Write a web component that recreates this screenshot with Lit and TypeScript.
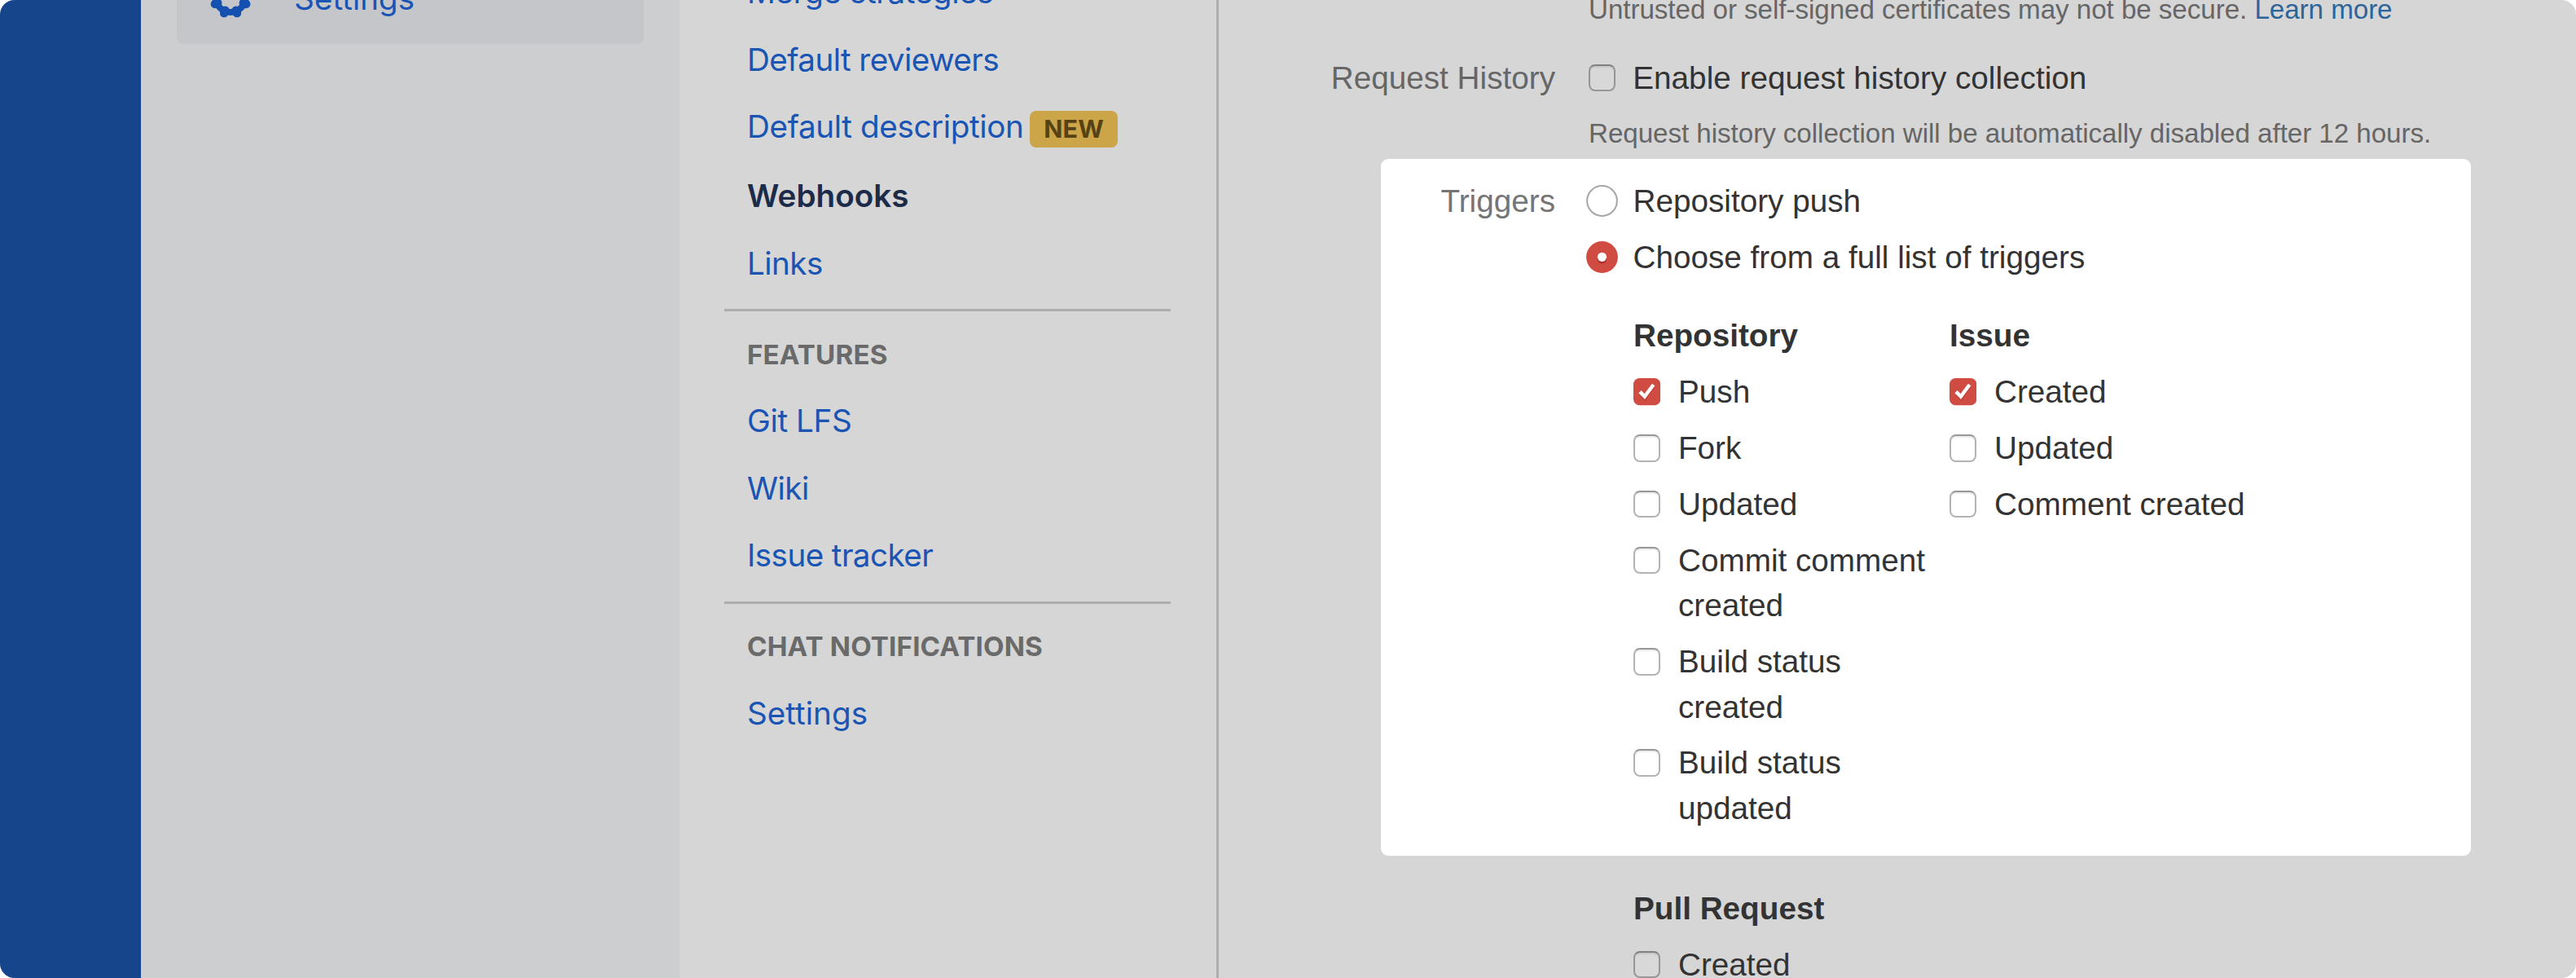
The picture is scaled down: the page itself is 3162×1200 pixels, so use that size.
import { LitElement, html, css, svg } from "lit";
import { classMap } from "lit/directives/class-map.js";

interface NavItem {
  label: string;
  fit?: "tight" | "snug";
  active?: boolean;
  badge?: string;
}
interface NavSection {
  title?: string;
  wide?: boolean;
  items: NavItem[];
}
interface TriggerGroup {
  title: string;
  options: { label: string; checked?: boolean }[];
}

const NAV: NavSection[] = [
  {
    items: [
      { label: "Merge strategies", fit: "snug" },
      { label: "Default reviewers", fit: "tight" },
      { label: "Default description", fit: "snug", badge: "NEW" },
      { label: "Webhooks", active: true },
      { label: "Links", fit: "tight" },
    ],
  },
  {
    title: "Features",
    items: [
      { label: "Git LFS", fit: "snug" },
      { label: "Wiki", fit: "tight" },
      { label: "Issue tracker", fit: "tight" },
    ],
  },
  { title: "Chat notifications", items: [{ label: "Settings" }] },
];

const REPOSITORY: TriggerGroup = {
  title: "Repository",
  options: [
    { label: "Push", checked: true },
    { label: "Fork" },
    { label: "Updated" },
    { label: "Commit comment created" },
    { label: "Build status created" },
    { label: "Build status updated" },
  ],
};
const ISSUE: TriggerGroup = {
  title: "Issue",
  options: [{ label: "Created", checked: true }, { label: "Updated" }, { label: "Comment created" }],
};
const PULL_REQUEST: TriggerGroup = {
  title: "Pull Request",
  options: [{ label: "Created" }],
};

class CheckMark extends LitElement {
  static properties = {
    checked: { type: Boolean, reflect: true },
    dimmed: { type: Boolean, reflect: true },
  };
  declare checked: boolean;
  declare dimmed: boolean;

  static styles = css`
    :host {
      display: block;
      flex: none;
      width: 33.3px;
      height: 33.3px;
    }
    .box {
      display: block;
      box-sizing: border-box;
      width: 100%;
      height: 100%;
      border: 2px solid #b3b3b3;
      border-top-color: #979797;
      border-radius: 8px;
      background: #fff;
      box-shadow: inset 0 2px 1px #ececec;
    }
    :host([dimmed]) .box {
      border-color: #969696;
      border-top-color: #808080;
      background: #d8d8d8;
      box-shadow: inset 0 2px 1px #c8c8c8;
    }
    .mark {
      display: block;
      width: 100%;
      height: 100%;
    }
  `;

  render() {
    return this.checked
      ? html`<svg class="mark" viewBox="0 0 33.3 33.3" fill="none">
          <rect width="33.3" height="33.3" rx="7.5" fill="#d04c43" />
          <path d="M9 20.2 14.2 25.6 24.3 11" stroke="#b93a33" stroke-width="3" />
          <path d="M8 16.6 13.8 22.6 24.6 8" stroke="#fff" stroke-width="4.4" />
        </svg>`
      : html`<span class="box"></span>`;
  }
}
customElements.define("check-mark", CheckMark);

class AppRoot extends LitElement {
  static styles = css`
    :host {
      display: block;
      font-family: "Liberation Sans", Arial, sans-serif;
      font-size: 38.7px;
      line-height: 55.2px;
      color: #333;
    }
    .page {
      display: flex;
      width: 3162px;
      height: 1200px;
      overflow: hidden;
      border-radius: 18px;
      background: #d6d6d6;
    }
    .rail {
      flex: none;
      width: 173.4px;
      background: #17458c;
    }
    .sidebar {
      flex: none;
      box-sizing: border-box;
      width: 660.6px;
      padding: 0 44px;
      background: #cdced0;
    }
    .selected {
      display: flex;
      align-items: center;
      box-sizing: border-box;
      height: 110px;
      margin-top: -56px;
      padding-left: 40px;
      gap: 51.5px;
      border-radius: 8px;
      background: #c5c6ca;
      color: #1a55b4;
      font-family: Inter, sans-serif;
    }
    .gear {
      flex: none;
      width: 52px;
      height: 52px;
      margin-top: -4px;
    }
    .nav {
      flex: none;
      box-sizing: border-box;
      width: 662px;
      padding: 0 55.5px;
      border-right: 3px solid #adadad;
      font-family: Inter, sans-serif;
      color: #1a55b4;
    }
    .nav-section {
      padding-left: 27.5px;
    }
    .nav-section:first-child {
      margin-top: -51px;
    }
    .divider {
      height: 3px;
      margin: 14.6px 0 12.8px;
      background: #adadad;
    }
    .nav-title {
      font-size: 33.2px;
      font-weight: 700;
      line-height: 80.4px;
      letter-spacing: 0.12px;
      text-transform: uppercase;
      color: #6a6a6a;
    }
    .nav-item {
      display: flex;
      line-height: 82.6px;
      white-space: nowrap;
    }
    .nav-item.snug {
      letter-spacing: -0.41px;
    }
    .nav-item.tight {
      letter-spacing: -0.61px;
    }
    .nav-item.active {
      font-weight: 600;
      color: #1c2b49;
    }
    .nav-item.badged {
      line-height: 82.6px;
      padding-bottom: 2.4px;
    }
    .badge {
      box-sizing: border-box;
      width: 108px;
      height: 45px;
      margin: 21.5px 0 0 7.5px;
      border-radius: 8px;
      background: #cca548;
      color: #574213;
      font-size: 30.4px;
      font-weight: 700;
      line-height: 45px;
      letter-spacing: 0.2px;
      text-align: center;
    }
    .form {
      flex: 1;
      min-width: 0;
    }
    .row {
      display: flex;
      gap: 41px;
    }
    .label {
      flex: none;
      width: 413px;
      text-align: right;
      white-space: nowrap;
      color: #666;
    }
    .hint {
      font-size: 33.2px;
      line-height: 46px;
      letter-spacing: -0.06px;
      white-space: nowrap;
      color: #666;
    }
    .hint.top {
      margin-top: -11px;
    }
    .hint.after {
      margin-top: 18px;
    }
    .learn {
      color: #2f6499;
    }
    .history {
      margin-top: 32.6px;
    }
    .choice {
      display: flex;
    }
    .choice.sub {
      margin-top: 13.75px;
    }
    .choice check-mark {
      margin-top: 11px;
    }
    .choice .text {
      margin-left: 21.7px;
    }
    .choice.enable .text {
      margin-left: 21px;
    }
    .radio {
      flex: none;
      width: 39px;
      height: 39px;
      margin: 7.8px 18.3px 0 -2.8px;
    }
    .panel {
      box-sizing: border-box;
      width: 1338px;
      height: 855px;
      margin: 8.2px 0 0 199px;
      padding-top: 24px;
      border-radius: 9px;
      background: #fff;
    }
    .panel .label {
      width: 214px;
      color: #757575;
    }
    .groups {
      display: flex;
      gap: 18px;
      margin: 41.2px 0 0 55px;
    }
    .group {
      width: 370px;
    }
    .group-title {
      font-weight: 700;
    }
    .more {
      margin: 37px 0 0 509px;
    }
  `;

  private gear() {
    const teeth = [22.5, 67.5, 112.5, 157.5, 202.5, 247.5, 292.5, 337.5];
    return html`<svg class="gear" viewBox="-26 -26 52 52" fill="none" stroke="#1450b0">
      <circle r="18" stroke-width="8" />
      ${teeth.map(
        (a) => svg`<path d="M0 18V21.8" stroke-width="11" stroke-linecap="round" transform="rotate(${a}) scale(.95)" />`
      )}
    </svg>`;
  }

  private radio(on: boolean) {
    return on
      ? html`<svg class="radio" viewBox="0 0 39 39">
          <circle cx="19.5" cy="19.5" r="19.4" fill="#d04c43" />
          <circle cx="19.5" cy="22" r="5.6" fill="#b0302b" />
          <circle cx="19.5" cy="19.3" r="5.6" fill="#fff" />
        </svg>`
      : html`<svg class="radio" viewBox="0 0 39 39">
          <circle cx="19.5" cy="19.5" r="18.4" fill="#fff" stroke="#a6a6a6" stroke-width="2" />
        </svg>`;
  }

  private navSection(section: NavSection, index: number) {
    return html`
      ${index ? html`<div class="divider"></div>` : ""}
      <div class="nav-section">
        ${section.title ? html`<div class="nav-title">${section.title}</div>` : ""}
        ${section.items.map(
          (item) => html`<div
            class=${classMap({
              "nav-item": true,
              active: !!item.active,
              badged: !!item.badge,
              tight: item.fit === "tight",
              snug: item.fit === "snug",
            })}
          ><span>${item.label}</span>${item.badge ? html`<span class="badge">${item.badge}</span>` : ""}</div>`
        )}
      </div>
    `;
  }

  private group(group: TriggerGroup, dimmed = false) {
    return html`<div class="group">
      <div class="group-title">${group.title}</div>
      ${group.options.map(
        (o) => html`<div class="choice sub">
          <check-mark ?checked=${!!o.checked} ?dimmed=${dimmed}></check-mark>
          <span class="text">${o.label}</span>
        </div>`
      )}
    </div>`;
  }

  render() {
    return html`<div class="page">
      <div class="rail"></div>
      <div class="sidebar">
        <div class="selected">${this.gear()}<span>Settings</span></div>
      </div>
      <div class="nav">${NAV.map((s, i) => this.navSection(s, i))}</div>
      <div class="form">
        <div class="row">
          <div class="label"></div>
          <div class="hint top">
            Untrusted or self-signed certificates may not be secure. <span class="learn">Learn more</span>
          </div>
        </div>
        <div class="row history">
          <div class="label">Request History</div>
          <div>
            <div class="choice enable">
              <check-mark dimmed></check-mark>
              <span class="text">Enable request history collection</span>
            </div>
            <div class="hint after">Request history collection will be automatically disabled after 12 hours.</div>
          </div>
        </div>
        <div class="panel">
          <div class="row">
            <div class="label">Triggers</div>
            <div>
              <div class="choice">${this.radio(false)}<span>Repository push</span></div>
              <div class="choice sub">${this.radio(true)}<span>Choose from a full list of triggers</span></div>
              <div class="groups">${this.group(REPOSITORY)}${this.group(ISSUE)}</div>
            </div>
          </div>
        </div>
        <div class="more">${this.group(PULL_REQUEST, true)}</div>
      </div>
    </div>`;
  }
}
customElements.define("app-root", AppRoot);
